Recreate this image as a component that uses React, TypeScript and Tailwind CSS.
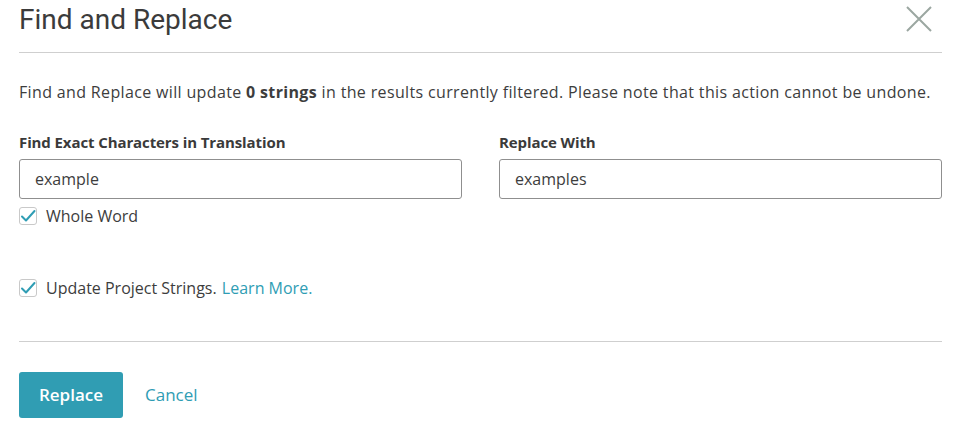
import { useState } from "react";

function Checkbox({ checked, onChange }: { checked: boolean; onChange: () => void }) {
  return (
    <button
      type="button"
      onClick={onChange}
      className="flex h-[18px] w-[18px] shrink-0 items-center justify-center rounded-[3px] border border-[#c9c9c9] bg-white"
    >
      {checked && (
        <svg width="16" height="14" viewBox="0 0 16 14" fill="none">
          <path d="M2 7.5 L6 11.5 L14.5 2" stroke="#2f9db4" strokeWidth="2" strokeLinecap="round" strokeLinejoin="round" />
        </svg>
      )}
    </button>
  );
}

export default function App() {
  const [find, setFind] = useState("example");
  const [replace, setReplace] = useState("examples");
  const [wholeWord, setWholeWord] = useState(true);
  const [updateProject, setUpdateProject] = useState(true);

  return (
    <div className="h-[426px] w-[955px] bg-white pl-[19px] pr-[13px] font-['Open_Sans','Liberation_Sans',sans-serif] text-[#3d3d3d]">
      {/* Header */}
      <div className="flex h-[53px] items-start justify-between border-b border-[#cfcfcf] pr-[10px]">
        <h1 className="mt-[1px] font-['Roboto',sans-serif] text-[28px] leading-[38px] text-[#3b3b3b]">
          Find and Replace
        </h1>
        <button type="button" className="mt-[6px]">
          <svg width="26" height="26" viewBox="0 0 26 26">
            <path d="M1 1 L25 25 M25 1 L1 25" stroke="#9ba7a1" strokeWidth="2" />
          </svg>
        </button>
      </div>

      <p className="mt-[27px] text-[16px] leading-[24px] tracking-[0.35px]">
        Find and Replace will update <strong className="font-bold">0 strings</strong> in the results currently filtered. Please note
        that this action cannot be undone.
      </p>

      <div className="mt-[28px] grid grid-cols-2 gap-[37px]">
        <div>
          <label className="block text-[15px] font-bold leading-[20px] tracking-[-0.1px] text-[#3a3a3a]">
            Find Exact Characters in Translation
          </label>
          <input
            value={find}
            onChange={(e) => setFind(e.target.value)}
            className="mt-[7px] h-[40px] w-full rounded-[3px] border border-[#8f8f8f] px-[15px] text-[16px] text-[#3d3d3d] outline-none"
          />
          <label className="mt-[7px] flex items-center gap-[9px] text-[16px] leading-[20px]">
            <Checkbox checked={wholeWord} onChange={() => setWholeWord(!wholeWord)} />
            Whole Word
          </label>
        </div>
        <div>
          <label className="block text-[15px] font-bold leading-[20px] tracking-[-0.1px] text-[#3a3a3a]">Replace With</label>
          <input
            value={replace}
            onChange={(e) => setReplace(e.target.value)}
            className="mt-[7px] h-[40px] w-full rounded-[3px] border border-[#8f8f8f] px-[15px] text-[16px] text-[#3d3d3d] outline-none"
          />
        </div>
      </div>

      <label className="mt-[52px] flex items-center gap-[9px] text-[16px] leading-[20px]">
        <Checkbox checked={updateProject} onChange={() => setUpdateProject(!updateProject)} />
        <span>
          Update Project Strings. <a className="ml-[1px] text-[#2f9db4]">Learn More.</a>
        </span>
      </label>

      <div className="mt-[43px] border-t border-[#cfcfcf]" />

      <div className="mt-[30px] flex items-center gap-[22px]">
        <button
          type="button"
          className="h-[46px] w-[104px] rounded-[3px] bg-[#309db3] text-[17px] font-semibold text-white"
        >
          Replace
        </button>
        <button type="button" className="text-[17px] text-[#2f9db4]">
          Cancel
        </button>
      </div>
    </div>
  );
}
